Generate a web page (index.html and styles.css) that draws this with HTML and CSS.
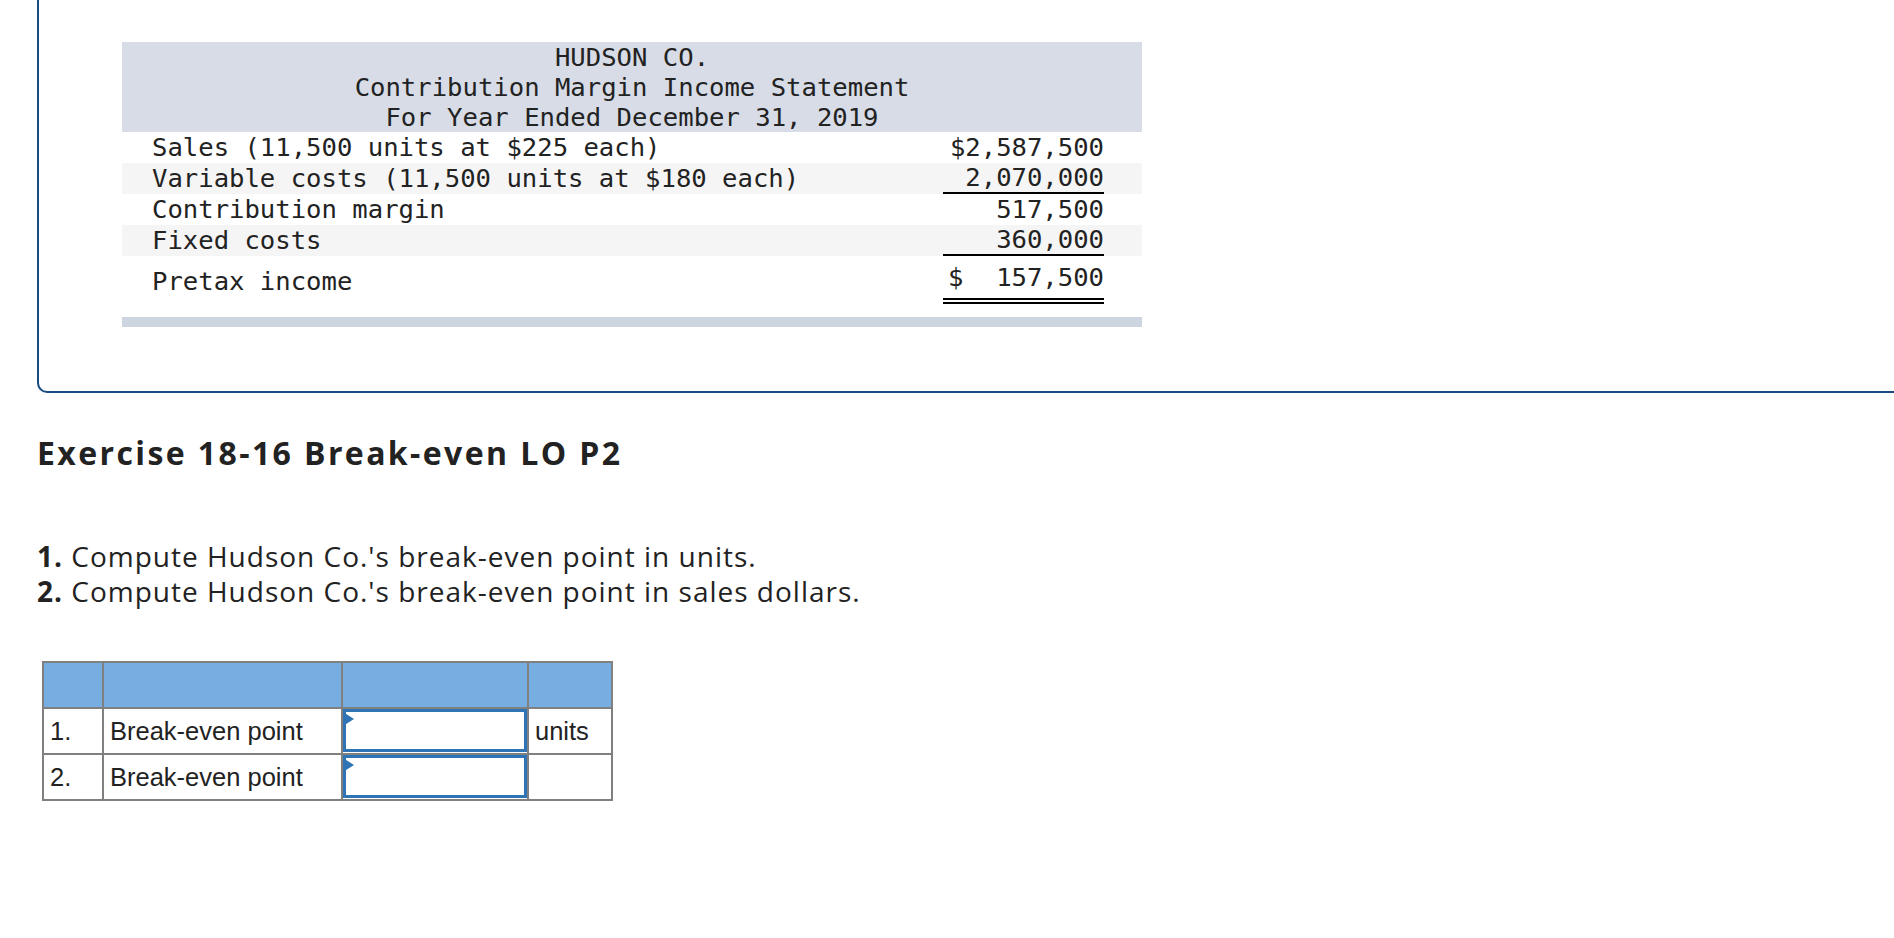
FILE: index.html
```html
<!DOCTYPE html>
<html lang="en">
<head>
<meta charset="utf-8">
<title>Exercise 18-16 Break-even</title>
<link rel="stylesheet" href="styles.css">
</head>
<body>
<div class="page">
  <div class="card">
    <div class="statement">
      <div class="st-head">
        <div>HUDSON CO.</div>
        <div>Contribution Margin Income Statement</div>
        <div>For Year Ended December 31, 2019</div>
      </div>
      <div class="st-row"><span class="lbl">Sales (11,500 units at $225 each)</span><span class="amt">$2,587,500</span></div>
      <div class="st-row alt"><span class="lbl">Variable costs (11,500 units at $180 each)</span><span class="amt single">2,070,000</span></div>
      <div class="st-row"><span class="lbl">Contribution margin</span><span class="amt">517,500</span></div>
      <div class="st-row alt"><span class="lbl">Fixed costs</span><span class="amt single">360,000</span></div>
      <div class="st-row total"><span class="lbl">Pretax income</span><span class="amt double"><span>$</span><span>157,500</span></span></div>
      <div class="st-foot"></div>
    </div>
  </div>

  <h2 class="ex-title">Exercise 18-16 Break-even LO P2</h2>

  <p class="question"><b>1.</b> Compute Hudson Co.'s break-even point in units.<br><b>2.</b> Compute Hudson Co.'s break-even point in sales dollars.</p>

  <table class="answer">
    <colgroup>
      <col class="c1"><col class="c2"><col class="c3"><col class="c4">
    </colgroup>
    <thead>
      <tr><th></th><th></th><th></th><th></th></tr>
    </thead>
    <tbody>
      <tr><td class="num">1.</td><td>Break-even point</td><td class="inp"><div class="field"><span class="flag"></span></div></td><td>units</td></tr>
      <tr><td class="num">2.</td><td>Break-even point</td><td class="inp"><div class="field"><span class="flag"></span></div></td><td></td></tr>
    </tbody>
  </table>
</div>
</body>
</html>
```

FILE: styles.css
```css
html, body {
  margin: 0;
  padding: 0;
  overflow: hidden;
  background: #ffffff;
}

.page {
  padding-left: 37px;
  font-family: "Open Sans", "Liberation Sans", sans-serif;
  color: #222;
}

.card {
  margin-right: -60px;
  border-left: 2px solid #174b82;
  border-bottom: 2px solid #174b82;
  border-bottom-left-radius: 10px;
  padding: 42px 0 64px 83px;
}

.statement {
  width: 1020px;
  font-family: "DejaVu Sans Mono", "Liberation Mono", monospace;
  font-size: 25.6px;
  color: #222;
}

.st-head {
  background: #d7dce6;
  text-align: center;
  line-height: 30px;
  white-space: nowrap;
}

.st-row {
  display: grid;
  grid-template-columns: 1fr 161px;
  padding: 0 38px 0 30px;
  height: 31px;
  line-height: 31px;
  white-space: pre;
}

.st-row.alt {
  background: #f5f5f5;
}

.amt {
  text-align: right;
}

.amt.single {
  line-height: 29px;
  border-bottom: 2px solid #000;
}

.st-row.total {
  height: auto;
  line-height: 30px;
}

.st-row.total .lbl {
  padding-top: 10px;
}

.amt.double {
  display: flex;
  justify-content: space-between;
  padding: 6px 0 6px 5px;
  border-bottom: 6px double #000;
}

.st-foot {
  margin-top: 13px;
  height: 10px;
  background: #cdd5e1;
}

.ex-title {
  margin: 42px 0 0 0;
  font-size: 32px;
  line-height: 36px;
  font-weight: 700;
  letter-spacing: 2.4px;
  color: #222;
}

.question {
  margin: 68px 0 0 0;
  font-size: 28px;
  line-height: 35px;
  letter-spacing: 1px;
  color: #222;
}

.question b {
  font-weight: 700;
}

.answer {
  margin: 52px 0 0 5px;
  border-collapse: collapse;
  table-layout: fixed;
  width: 569px;
  font-family: "Liberation Sans", Arial, sans-serif;
  font-size: 25.5px;
  color: #222;
}

.answer col.c1 { width: 60px; }
.answer col.c2 { width: 239px; }
.answer col.c3 { width: 186px; }
.answer col.c4 { width: 84px; }

.answer th,
.answer td {
  border: 2px solid #808080;
  height: 44px;
  padding: 0 6px;
  text-align: left;
  font-weight: normal;
}

.answer th {
  background: #76aee2;
}

.answer td.inp {
  padding: 0;
  vertical-align: top;
}

.field {
  position: relative;
  height: 43px;
  box-sizing: border-box;
  border: 3px solid #2f75b5;
}

.flag {
  position: absolute;
  top: 0;
  left: -3px;
  width: 0;
  height: 0;
  border-left: 11px solid #2f75b5;
  border-top: 7px solid transparent;
  border-bottom: 7px solid transparent;
}
```
